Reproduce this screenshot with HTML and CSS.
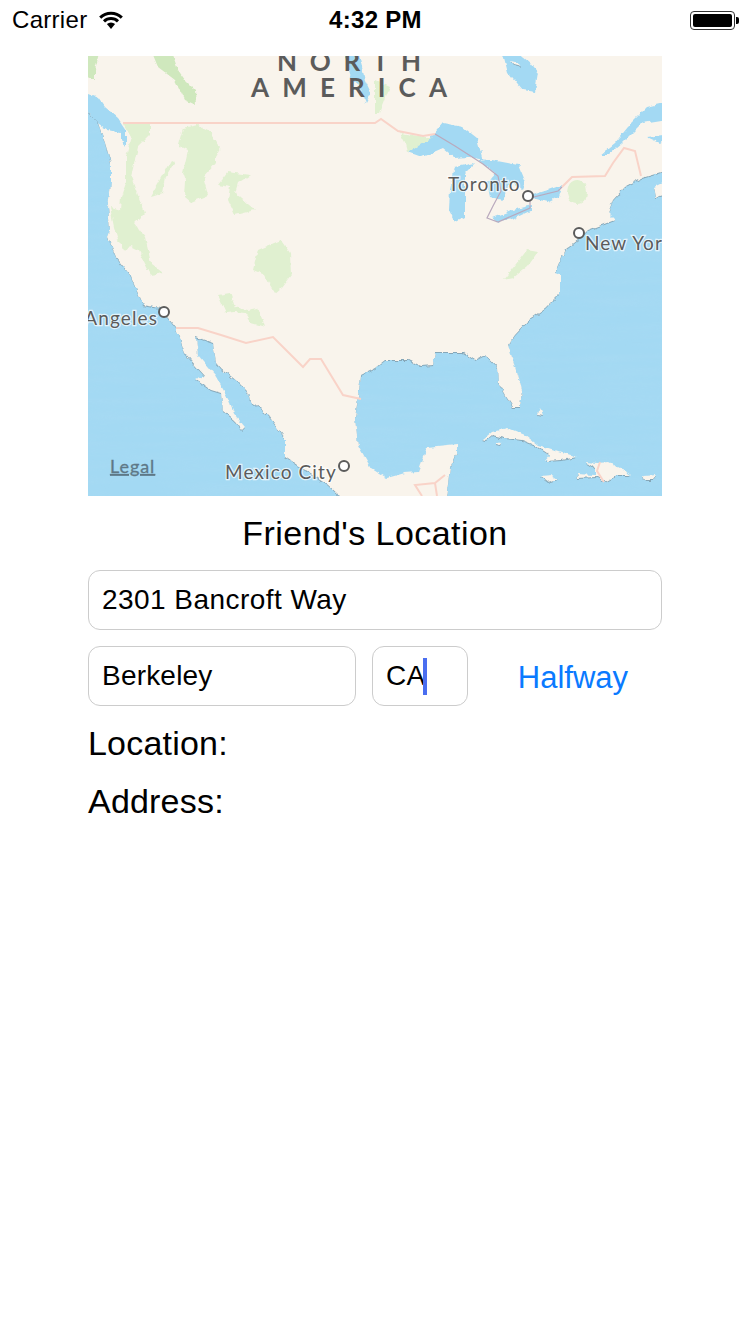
FILE: index.html
```html
<!DOCTYPE html>
<html lang="en">
<head>
  <meta charset="UTF-8">
  <meta name="viewport" content="width=device-width, initial-scale=1.0">
  <title>Friend's Location</title>
  <link rel="stylesheet" href="styles.css">
</head>
<body>
  <!-- Status bar -->
  <div class="status-bar">
    <div class="status-left">
      <span class="carrier">Carrier</span>
      <svg class="wifi" width="24" height="18" viewBox="0 0 24 18">
        <path d="M1.2 6.6 A15.5 15.5 0 0 1 22.8 6.6" fill="none" stroke="#000" stroke-width="3"/>
        <path d="M5 10.4 A10 10 0 0 1 19 10.4" fill="none" stroke="#000" stroke-width="3"/>
        <path d="M7.9 13 A6 6 0 0 1 16.1 13 L12 18 Z" fill="#000"/>
      </svg>
    </div>
    <div class="status-time">4:32 PM</div>
    <div class="status-right">
      <div class="battery"><div class="battery-fill"></div></div>
      <div class="battery-nub"></div>
    </div>
  </div>

  <div class="content">
    <!-- Map -->
    <svg class="map" width="574" height="440" viewBox="0 0 574 440">
      <defs>
        <filter id="ripple" x="0" y="0" width="100%" height="100%">
          <feTurbulence type="fractalNoise" baseFrequency="0.012 0.14" numOctaves="2" seed="4"/>
          <feColorMatrix type="matrix" values="0 0 0 0 0.45  0 0 0 0 0.72  0 0 0 0 0.9  0 0 0 1.1 -0.35"/>
        </filter>
        <filter id="rough" x="-5%" y="-5%" width="110%" height="110%">
          <feTurbulence type="fractalNoise" baseFrequency="0.16" numOctaves="2" seed="7" result="noise"/>
          <feDisplacementMap in="SourceGraphic" in2="noise" scale="5" xChannelSelector="R" yChannelSelector="G"/>
        </filter>
      </defs>

      <rect class="water" width="574" height="440"/>
      <rect width="574" height="440" filter="url(#ripple)" opacity="0.35"/>

      <g filter="url(#rough)">
        <!-- Land -->
        <path class="land" d="M-10 -10 L584 -10 L584 113 L574 116 L554 122 L537 131 L525 144 L520 157 L527 164 L500 174 L490 184 L477 194 L467 217 L472 219 L472 237 L457 252 L444 261 L427 279 L420 289 L429 316 L434 334 L432 351 L425 351 L419 342 L410 326 L409 312 L397 299 L387 304 L374 296 L360 296 L347 296 L345 309 L332 310 L320 304 L297 304 L287 312 L273 319 L270 342 L267 362 L270 389 L283 412 L299 422 L317 417 L330 416 L339 392 L369 389 L369 396 L362 412 L357 450 L263 450 L240 429 L213 412 L197 401 L197 382 L180 359 L162 344 L160 336 L150 326 L133 312 L128 306 L125 287 L108 281 L110 299 L120 311 L127 319 L140 342 L147 359 L157 371 L154 374 L147 365 L135 355 L133 337 L123 334 L108 324 L117 320 L107 309 L97 297 L88 272 L72 252 L55 249 L42 219 L28 201 L20 181 L22 174 L20 151 L23 127 L23 107 L17 87 L10 67 L0 57 L-10 50 Z"/>
        <path class="land" d="M394 384 L404 376 L420 372 L437 379 L450 389 L467 394 L489 401 L474 404 L457 405 L462 399 L447 389 L434 384 L417 382 L404 379 L397 385 Z"/>
        <path class="land" d="M497 406 L510 407 L520 406 L532 412 L543 419 L529 419 L517 426 L509 421 L490 422 L489 418 L507 419 L507 412 Z"/>
        <path class="land" d="M452 420 L464 419 L470 423 L460 426 Z"/>
        <path class="land" d="M555 420 L569 419 L565 424 L557 424 Z"/>
        <path class="land" d="M452 352 L455 359 L450 358 Z"/>
        <path class="land" d="M408 386 L413 387 L412 389 L408 388 Z"/>

        <!-- Lakes and inlets -->
        <path class="water" d="M-10 35 L0 37 L10 41 L17 51 L30 62 L38 74 L38 91 L33 84 L33 77 L20 74 L8 66 L0 57 L-10 50 Z"/>
        <path class="water" d="M414 -6 L427 -6 L442 7 L450 17 L447 36 L434 34 L420 17 Z"/>
        <path class="land" d="M423 5 L431 7 L433 10 L425 8 Z"/>
        <path class="water" d="M255 -6 L270 -6 L277 24 L283 37 L278 47 L270 27 L263 21 Z"/>
        <path class="water" d="M320 96 L345 79 L355 67 L375 71 L389 82 L394 101 L397 104 L380 101 L367 102 L355 92 L334 101 Z"/>
        <path class="water" d="M367 111 L387 107 L377 117 L377 161 L367 166 L361 154 L362 134 Z"/>
        <path class="water" d="M390 104 L404 104 L430 109 L437 126 L434 134 L422 124 L415 144 L402 141 L399 127 L407 117 Z"/>
        <path class="water" d="M404 162 L424 154 L444 149 L444 154 L427 162 L410 167 Z"/>
        <path class="water" d="M444 139 L460 134 L474 129 L470 141 L460 146 L444 142 Z"/>
        <path class="water" d="M584 45 L559 51 L544 66 L527 87 L512 99 L520 99 L534 87 L554 67 L584 62 Z"/>
        <path class="water" d="M559 81 L584 78 L572 87 Z"/>
        <path class="land" d="M566 131 L584 122 L584 137 L568 141 Z"/>

        <!-- Green areas -->
        <path class="green" d="M-6 -6 L12 -6 L7 14 L7 24 L-6 21 Z"/>
        <path class="green" d="M63 -6 L83 -6 L90 14 L97 24 L107 34 L108 49 L97 44 L87 24 L70 11 Z"/>
        <path class="light" d="M35 67 L62 67 L62 79 L50 91 L43 121 L53 147 L57 157 L47 167 L57 181 L63 207 L75 217 L63 219 L50 194 L42 190 L37 196 L30 184 L26 171 L22 151 L32 154 L33 141 L38 127 L38 101 L43 81 Z"/>
        <path class="light" d="M95 72 L110 69 L120 74 L132 92 L127 101 L127 107 L115 121 L120 139 L103 146 L97 141 L98 124 L95 116 L100 94 L90 89 Z"/>
        <path class="light" d="M62 141 L83 104 L87 106 L78 121 L75 137 Z"/>
        <path class="light" d="M130 129 L140 116 L162 119 L150 127 L147 137 L167 154 L147 159 L140 144 L142 131 Z"/>
        <path class="light" d="M170 194 L193 184 L202 197 L203 219 L193 232 L187 237 L182 229 L177 219 L165 214 Z"/>
        <path class="light" d="M130 239 L142 237 L147 251 L160 254 L170 252 L177 271 L163 267 L157 257 L147 256 L138 257 Z"/>
        <path class="light" d="M312 77 L344 82 L320 96 L318 88 Z"/>
        <path class="light" d="M287 24 L302 31 L292 57 L287 57 Z"/>
        <ellipse class="light" cx="489" cy="136" rx="10" ry="12"/>
        <path class="light" d="M450 196 L439 194 L429 207 L415 224 L425 222 L440 210 Z"/>
      </g>

      <!-- Borders -->
      <g class="border">
        <path d="M35 67 L287 67 L293 63 L310 75 L335 80 L347 78"/>
        <path d="M474 131 L484 121 L517 120 L525 107 L536 92 L547 95 L553 120"/>
        <path d="M88 272 L110 272 L133 279 L158 287 L185 281 L203 299 L215 311 L222 303 L233 303 L255 339 L273 343"/>
        <path d="M357 419 L347 427 L327 429 L334 440 M347 427 L349 440"/>
        <path d="M512 406 L509 415 L516 426"/>
      </g>
      <path class="border-lake" d="M347 78 L367 90 L395 108 L410 120 L413 135 L405 150 L399 162 L410 166 L442 152 L442 142 L470 135 L474 131"/>

      <!-- Labels -->
      <text class="region" x="189" y="15" textLength="144">NORTH</text>
      <text class="region" x="163" y="41" textLength="196">AMERICA</text>
      <circle class="pin" cx="440" cy="140" r="5"/>
      <circle class="pin" cx="491" cy="177" r="5"/>
      <circle class="pin" cx="76" cy="256" r="5"/>
      <circle class="pin" cx="256" cy="410" r="5"/>
      <text class="city" x="360" y="135">Toronto</text>
      <text class="city" x="497" y="194">New York</text>
      <text class="city" x="70" y="269" text-anchor="end">Los Angeles</text>
      <text class="city" x="137" y="423">Mexico City</text>
      <text class="legal" x="22" y="417">Legal</text>
    </svg>

    <div class="title">Friend's Location</div>

    <div class="field street-field">2301 Bancroft Way</div>
    <div class="row">
      <div class="field city-field">Berkeley</div>
      <div class="field state-field">CA<span class="caret"></span></div>
      <div class="halfway-btn">Halfway</div>
    </div>

    <div class="info">Location:</div>
    <div class="info">Address:</div>
  </div>
</body>
</html>
```

FILE: styles.css
```css
body {
  margin: 0;
  background-color: #ffffff;
  color: #000000;
  font-family: "Liberation Sans", Arial, sans-serif;
}

/* Status bar */
.status-bar {
  display: grid;
  grid-template-columns: 1fr auto 1fr;
  align-items: center;
  height: 40px;
  margin-bottom: 16px;
  padding: 0 11px 0 12px;
  font-size: 24px;
}

.status-left {
  display: flex;
  align-items: center;
  gap: 12px;
}

.carrier {
  letter-spacing: 0.3px;
}

.status-time {
  font-weight: bold;
  letter-spacing: 0.3px;
}

.status-right {
  display: flex;
  align-items: center;
  justify-content: flex-end;
}

.battery {
  box-sizing: border-box;
  width: 45px;
  height: 19px;
  padding: 2px;
  border: 1px solid #333333;
  border-radius: 4px;
}

.battery-fill {
  height: 100%;
  background-color: #000000;
  border-radius: 2px;
}

.battery-nub {
  width: 3px;
  height: 7px;
  margin-left: 1px;
  background-color: #000000;
  border-radius: 0 2px 2px 0;
}

/* Content column */
.content {
  width: 574px;
  margin: 0 auto;
}

/* Map */
.map {
  display: block;
}

.water {
  fill: #a3d9f3;
}

.land {
  fill: #f9f4ec;
  filter: drop-shadow(0 1px 0 #86a7b8);
}

.green {
  fill: #cfe8bd;
}

.light {
  fill: #e0f0d0;
}

.border path {
  fill: none;
  stroke: #f9d3c8;
  stroke-width: 2;
}

.border-lake {
  fill: none;
  stroke: #b9a9bd;
  stroke-width: 1.2;
}

.region {
  font-family: Lato, sans-serif;
  font-size: 26px;
  font-weight: bold;
  fill: #5b5b5b;
}

.city {
  font-family: Lato, sans-serif;
  font-size: 19px;
  letter-spacing: 1.1px;
  fill: #5b5b5b;
  stroke: rgba(255, 255, 255, 0.7);
  stroke-width: 2.5px;
  paint-order: stroke;
}

.legal {
  font-family: Lato, sans-serif;
  font-size: 18px;
  letter-spacing: 0.9px;
  text-decoration: underline;
  fill: #5e7887;
  stroke: #5e7887;
  stroke-width: 0.3px;
}

.pin {
  fill: #ffffff;
  stroke: #5b5b5b;
  stroke-width: 2;
}

/* Form */
.title {
  padding: 18px 0 17px;
  font-size: 34px;
  line-height: 39px;
  letter-spacing: 0.44px;
  text-align: center;
}

.field {
  box-sizing: border-box;
  display: flex;
  align-items: center;
  height: 60px;
  padding: 0 13px;
  background-color: #ffffff;
  border: 1px solid #cccccc;
  border-radius: 12px;
  font-size: 28px;
  letter-spacing: 0.2px;
}

.street-field {
  letter-spacing: 0.45px;
}

.row {
  display: flex;
  align-items: center;
  gap: 16px;
  margin-top: 16px;
}

.city-field {
  width: 268px;
}

.state-field {
  width: 96px;
}

.caret {
  width: 4px;
  height: 37px;
  margin-left: -2px;
  background-color: #4a6ef0;
}

.halfway-btn {
  flex: 1;
  padding-top: 3px;
  color: #0a7aff;
  font-size: 31px;
  text-align: center;
}

.info {
  margin-top: 16px;
  font-size: 34px;
  line-height: 42px;
  letter-spacing: 0.2px;
}
```
